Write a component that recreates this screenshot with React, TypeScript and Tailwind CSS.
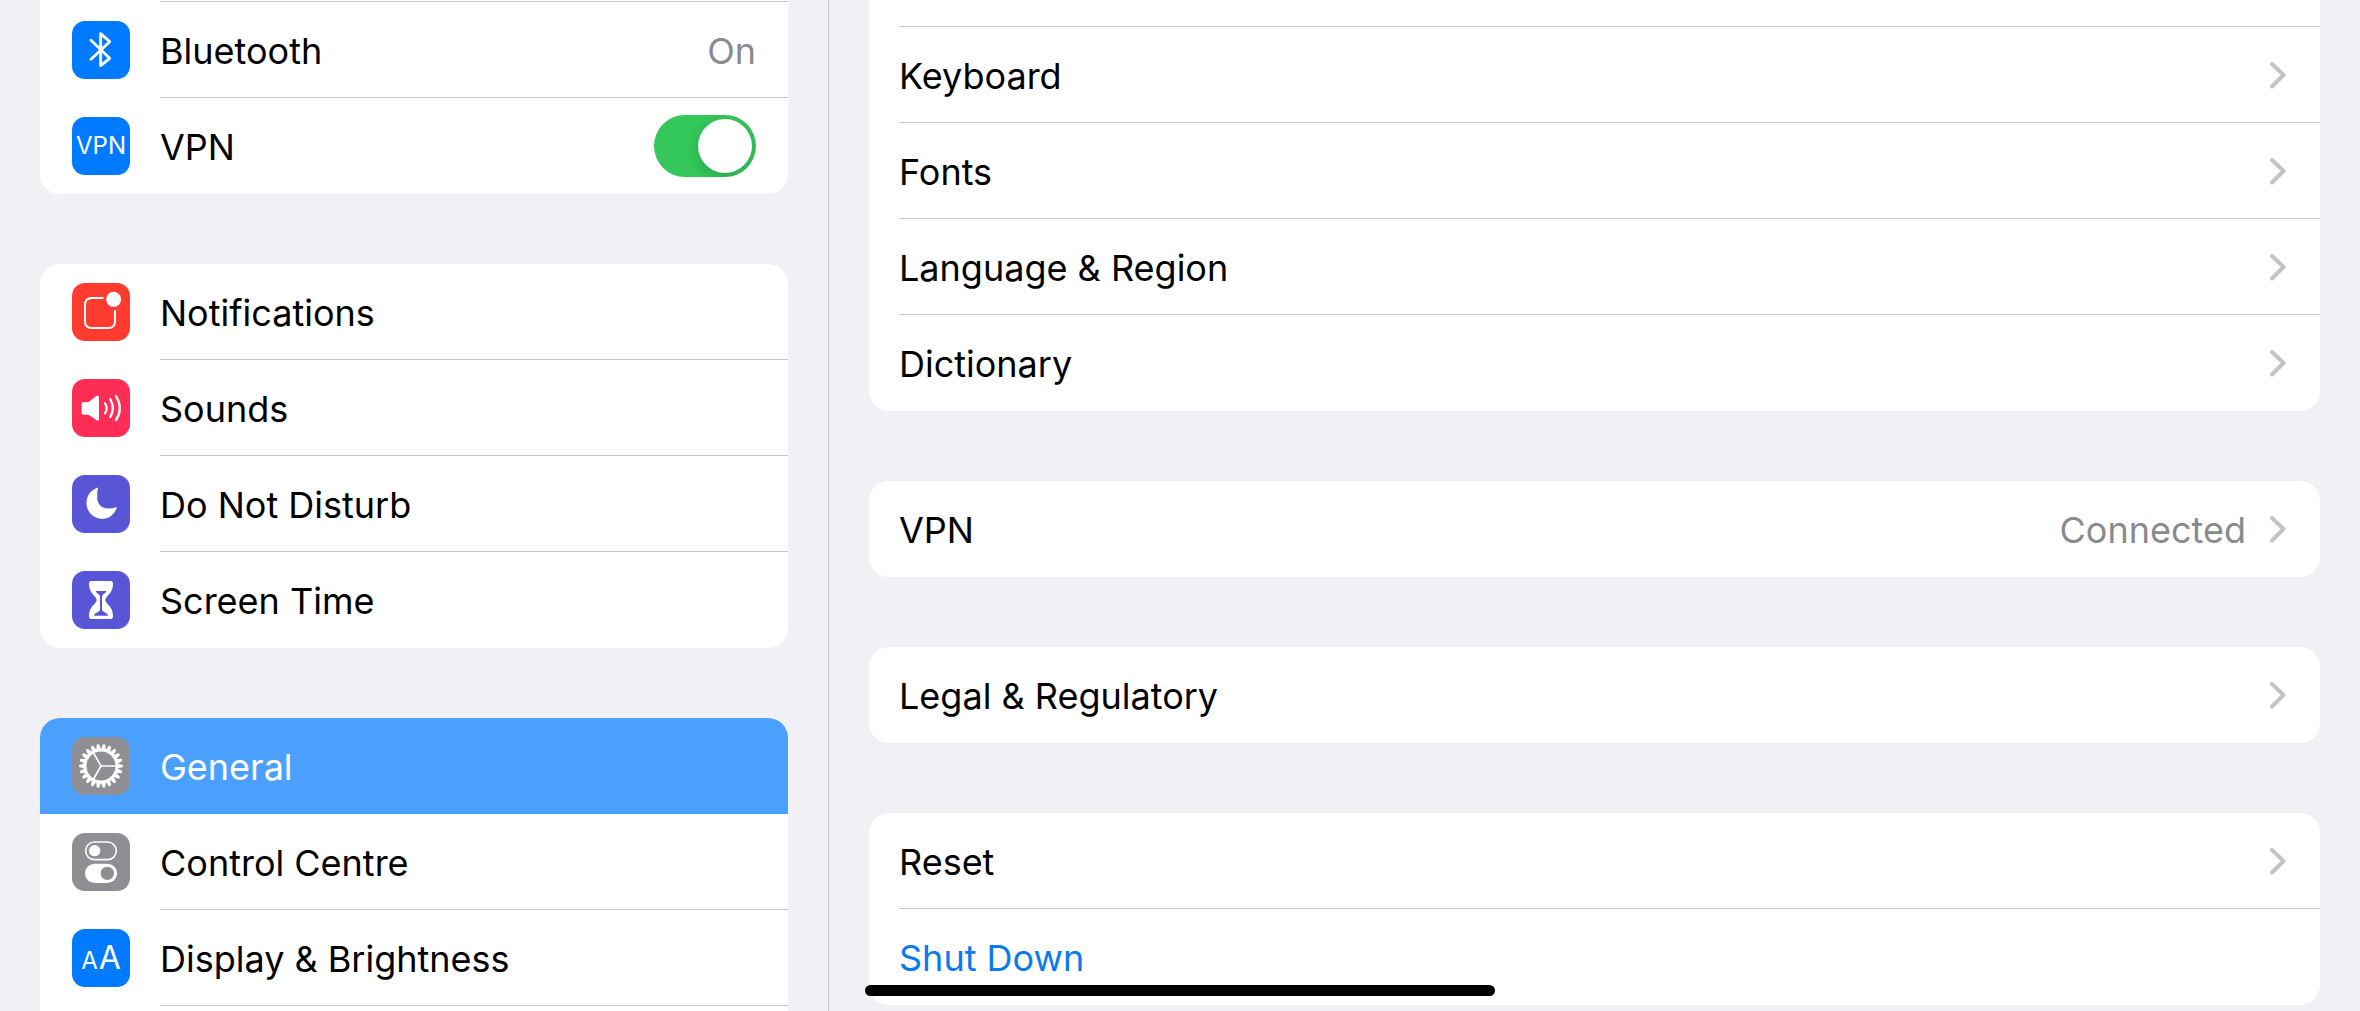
import { useState, ReactNode } from 'react';

const TEETH = Array.from({ length: 22 }, (_, i) => (i * 360) / 22);

// All glyphs share a 174 unit box, the tile is 58px
function Glyph({ children }: { children: ReactNode }) {
    return (
        <svg viewBox="0 0 174 174" className="h-full w-full" fill="none" stroke="white" strokeLinecap="round" strokeLinejoin="round" aria-hidden="true">
            {children}
        </svg>
    );
}

function BluetoothIcon() {
    return (
        <Glyph>
            <path strokeWidth="8.5" d="M57 58L113 112L86 134V38L113 62L57 115" />
        </Glyph>
    );
}

function NotificationsIcon() {
    return (
        <Glyph>
            <path strokeWidth="6" strokeLinecap="butt" d="M94 45H60Q39 45 39 66V114Q39 135 60 135H108Q129 135 129 114V81" />
            <circle cx="125" cy="49" r="22.5" fill="white" stroke="none" />
        </Glyph>
    );
}

function SoundsIcon() {
    return (
        <Glyph>
            <path strokeWidth="6" fill="white" d="M34 73H50L76 53Q78 52 78 55V120Q78 123 76 121L50 104H34Q32 104 32 102V75Q32 73 34 73Z" />
            <path strokeWidth="7" d="M99 73Q109 88 99 103M115 61Q130 88 115 114M132 51Q155 88 132 123" />
        </Glyph>
    );
}

function MoonIcon() {
    return (
        <Glyph>
            <path strokeWidth="3" fill="white" d="M76 40C56 46 45 63 45 84C45 111 65 130 91 130C111 130 127 117 133 98C124 101 116 102 109 102C88 102 74 88 74 66C74 56 75 48 76 40Z" />
        </Glyph>
    );
}

function HourglassIcon() {
    return (
        <Glyph>
            <path
                fill="white"
                fillRule="evenodd"
                stroke="none"
                d="M58 30H116Q123 30 123 37C123 58 115 66 106 76Q100 82 100 87Q100 92 106 98C115 107 123 116 123 137Q123 144 116 144H58Q51 144 51 137C51 116 59 107 68 98Q74 92 74 87Q74 82 68 76C59 66 51 58 51 37Q51 30 58 30ZM71 60H104Q101 66 95 69Q90 72 90 78V117Q91 121 98 124Q107 128 109 134H65Q67 128 76 124Q83 121 84 117V78Q84 72 79 69Q73 66 71 60Z"
            />
        </Glyph>
    );
}

function GearIcon() {
    return (
        <Glyph>
            <circle cx="87" cy="87" r="48" strokeWidth="9" />
            {TEETH.map((a) => (
                <path key={a} transform={`rotate(${a} 87 87)`} fill="white" stroke="none" d="M137 80L151 83Q153 84 153 87Q153 90 151 91L137 94Z" />
            ))}
            <path strokeWidth="5" d="M87 87H135M87 87L63 45M87 87L63 129" />
        </Glyph>
    );
}

function ControlsIcon() {
    return (
        <Glyph>
            <rect x="41" y="27" width="92" height="53" rx="26.5" strokeWidth="5" />
            <circle cx="68" cy="53" r="17" fill="white" stroke="none" />
            <rect x="39" y="92" width="96" height="58" rx="29" fill="white" stroke="none" />
            <circle cx="106" cy="121" r="20" fill="#8e8e93" stroke="none" />
        </Glyph>
    );
}

function Chevron() {
    return (
        <svg viewBox="0 0 16 28" className="h-7 w-4 shrink-0" fill="none" stroke="#c4c4c6" strokeWidth="4" strokeLinecap="round" strokeLinejoin="round" aria-hidden="true">
            <path d="M2 3L13.5 14L2 25.5" />
        </svg>
    );
}

type SideItem = { label: string; tile: string; icon: ReactNode; value?: string; selected?: boolean };

const CONNECTION: SideItem[] = [{ label: 'Bluetooth', tile: 'bg-[#007aff]', icon: <BluetoothIcon />, value: 'On' }];

const ALERTS: SideItem[] = [
    { label: 'Notifications', tile: 'bg-[#ff3b30]', icon: <NotificationsIcon /> },
    { label: 'Sounds', tile: 'bg-[#ff2d55]', icon: <SoundsIcon /> },
    { label: 'Do Not Disturb', tile: 'bg-[#5856d6]', icon: <MoonIcon /> },
    { label: 'Screen Time', tile: 'bg-[#5856d6]', icon: <HourglassIcon /> },
];

const SYSTEM: SideItem[] = [
    { label: 'General', tile: 'bg-[#8e8e93]', icon: <GearIcon />, selected: true },
    { label: 'Control Centre', tile: 'bg-[#8e8e93]', icon: <ControlsIcon /> },
    {
        label: 'Display & Brightness',
        tile: 'bg-[#007aff]',
        icon: (
            <span className="flex items-baseline gap-px leading-none">
                <span className="text-2xl leading-none">A</span>
                <span className="text-[32px] leading-none">A</span>
            </span>
        ),
    },
];

function Tile({ className, children }: { className: string; children: ReactNode }) {
    return <span className={`flex size-[58px] shrink-0 items-center justify-center overflow-hidden rounded-[13px] text-white ${className}`}>{children}</span>;
}

function SideRow({ item, last }: { item: SideItem; last?: boolean }) {
    return (
        <a
            href="#"
            aria-current={item.selected ? 'page' : undefined}
            className={`flex h-24 items-center gap-[30px] pl-8 ${item.selected ? 'bg-[#4ba0ff] text-white' : ''}`}
        >
            <Tile className={item.tile}>{item.icon}</Tile>
            <span className={`flex h-full flex-1 items-center justify-between border-b pt-0.5 pr-8 ${last || item.selected ? 'border-transparent' : 'border-[#c6c6c8]'}`}>
                <span>{item.label}</span>
                {item.value && <span className="text-[#8a8a8e]">{item.value}</span>}
            </span>
        </a>
    );
}

function DetailRow({ label, value, last }: { label: string; value?: string; last?: boolean }) {
    return (
        <a href="#" className="flex h-24 pl-[30px]">
            <span className={`flex flex-1 items-center gap-6 border-b pr-[34px] ${last ? 'border-transparent' : 'border-[#c6c6c8]'}`}>
                <span className="flex-1 pt-0.5">{label}</span>
                {value && <span className="pt-0.5 text-[#8a8a8e]">{value}</span>}
                <Chevron />
            </span>
        </a>
    );
}

export default function App() {
    const [vpn, setVpn] = useState(true);

    return (
        <div className="relative flex h-screen overflow-hidden bg-[#f0f0f5] font-['Inter','Liberation_Sans',sans-serif] text-4xl text-black">
            <nav className="flex w-[829px] shrink-0 flex-col gap-[70px] border-r border-[#c6c6c8] px-10">
                <div className="shrink-0 overflow-hidden rounded-b-[20px] bg-white">
                    <div className="ml-[120px] h-0.5 border-b border-[#c6c6c8]" />
                    {CONNECTION.map((item) => (
                        <SideRow key={item.label} item={item} />
                    ))}
                    <div className="flex h-24 items-center gap-[30px] px-8">
                        <Tile className="bg-[#007aff]">
                            <span className="text-2xl">VPN</span>
                        </Tile>
                        <label htmlFor="vpn" className="flex-1 pt-0.5">VPN</label>
                        <input
                            id="vpn"
                            type="checkbox"
                            role="switch"
                            checked={vpn}
                            onChange={(e) => setVpn(e.target.checked)}
                            className="flex h-[62px] w-[102px] shrink-0 cursor-pointer appearance-none overflow-hidden rounded-full bg-[#e9e9ea] p-1 before:size-[54px] before:rounded-full before:bg-white before:shadow-[0_4px_14px_rgba(0,0,0,0.16)] checked:justify-end checked:bg-[#34c759]"
                        />
                    </div>
                </div>

                <div className="shrink-0 overflow-hidden rounded-[20px] bg-white">
                    {ALERTS.map((item, i) => (
                        <SideRow key={item.label} item={item} last={i === ALERTS.length - 1} />
                    ))}
                </div>

                <div className="flex-1 overflow-hidden rounded-t-[20px] bg-white">
                    {SYSTEM.map((item) => (
                        <SideRow key={item.label} item={item} />
                    ))}
                </div>
            </nav>

            <main className="flex flex-1 flex-col gap-[70px] px-10">
                <div className="shrink-0 overflow-hidden rounded-b-[20px] bg-white">
                    <div className="ml-[30px] h-[27px] border-b border-[#c6c6c8]" />
                    <DetailRow label="Keyboard" />
                    <DetailRow label="Fonts" />
                    <DetailRow label="Language & Region" />
                    <DetailRow label="Dictionary" last />
                </div>

                <div className="shrink-0 rounded-[20px] bg-white">
                    <DetailRow label="VPN" value="Connected" last />
                </div>

                <div className="shrink-0 rounded-[20px] bg-white">
                    <DetailRow label="Legal & Regulatory" last />
                </div>

                <div className="shrink-0 rounded-[20px] bg-white">
                    <DetailRow label="Reset" />
                    <button type="button" className="h-24 w-full px-[30px] pt-0.5 text-left text-[#0a7aef]">
                        Shut Down
                    </button>
                </div>
            </main>

            <div className="absolute bottom-[15px] left-[865px] h-[11px] w-[630px] rounded-full bg-black" />
        </div>
    );
}
